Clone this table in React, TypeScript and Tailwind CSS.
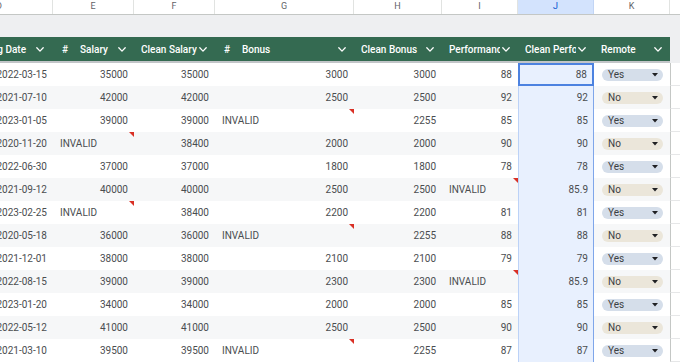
import React from "react";

type Row = { d: string; e: string; f: string; g: string; h: string; i: string; j: string; k: "Yes" | "No" };

const rows: Row[] = [
  { d: "2022-03-15", e: "35000", f: "35000", g: "3000", h: "3000", i: "88", j: "88", k: "Yes" },
  { d: "2021-07-10", e: "42000", f: "42000", g: "2500", h: "2500", i: "92", j: "92", k: "No" },
  { d: "2023-01-05", e: "39000", f: "39000", g: "INVALID", h: "2255", i: "85", j: "85", k: "Yes" },
  { d: "2020-11-20", e: "INVALID", f: "38400", g: "2000", h: "2000", i: "90", j: "90", k: "No" },
  { d: "2022-06-30", e: "37000", f: "37000", g: "1800", h: "1800", i: "78", j: "78", k: "Yes" },
  { d: "2021-09-12", e: "40000", f: "40000", g: "2500", h: "2500", i: "INVALID", j: "85.9", k: "No" },
  { d: "2023-02-25", e: "INVALID", f: "38400", g: "2200", h: "2200", i: "81", j: "81", k: "Yes" },
  { d: "2020-05-18", e: "36000", f: "36000", g: "INVALID", h: "2255", i: "88", j: "88", k: "No" },
  { d: "2021-12-01", e: "38000", f: "38000", g: "2100", h: "2100", i: "79", j: "79", k: "Yes" },
  { d: "2022-08-15", e: "39000", f: "39000", g: "2300", h: "2300", i: "INVALID", j: "85.9", k: "No" },
  { d: "2023-01-20", e: "34000", f: "34000", g: "2000", h: "2000", i: "85", j: "85", k: "Yes" },
  { d: "2022-05-12", e: "41000", f: "41000", g: "2500", h: "2500", i: "90", j: "90", k: "No" },
  { d: "2021-03-10", e: "39500", f: "39500", g: "INVALID", h: "2255", i: "87", j: "87", k: "Yes" },
];

const Chevron = () => (
  <svg width="8" height="5" viewBox="0 0 8 5" className="shrink-0">
    <path d="M0.8 0.8 L4 4.1 L7.2 0.8" fill="none" stroke="white" strokeWidth="1.3" strokeLinecap="round" strokeLinejoin="round" />
  </svg>
);

const Flag = () => (
  <span className="absolute right-0 top-0 w-0 h-0 border-t-[5px] border-l-[5px] border-t-[#d93025] border-l-transparent" />
);

function ValueCell({ v, w }: { v: string; w: string }) {
  const invalid = v === "INVALID";
  return (
    <div className={`${w} shrink-0 relative flex items-center ${invalid ? "justify-start pl-[7px]" : "justify-end pr-[6px]"}`}>
      <span className="whitespace-nowrap">{v}</span>
      {invalid && <Flag />}
    </div>
  );
}

function Chip({ v }: { v: "Yes" | "No" }) {
  return (
    <div
      className={`w-[61px] h-[12px] rounded-full flex items-center justify-between pl-[6px] pr-[5px] ${
        v === "Yes" ? "bg-[#d5deea]" : "bg-[#ebe6da]"
      }`}
    >
      <span className="leading-none text-[#3c4043]">{v}</span>
      <svg width="6" height="4" viewBox="0 0 6 4">
        <path d="M0 0 L6 0 L3 3.6 Z" fill="#202124" />
      </svg>
    </div>
  );
}

function HeaderCell({ w, label, hash }: { w: string; label: string; hash?: boolean }) {
  return (
    <div className={`${w} shrink-0 flex items-center ${hash ? "pl-[9px]" : "pl-[7px]"} pr-[8px] bg-[#346a51] border-b-2 border-[#c2c5c8]`}>
      {hash && <span className="w-[18px] shrink-0">#</span>}
      <span className="flex-1 min-w-0 overflow-hidden whitespace-nowrap">{label}</span>
      <span className="ml-[2px] flex items-center">
        <Chevron />
      </span>
    </div>
  );
}

const letters: { l: string; w: string; sel?: boolean }[] = [
  { l: "E", w: "w-[81px]" },
  { l: "F", w: "w-[81px]" },
  { l: "G", w: "w-[139px]" },
  { l: "H", w: "w-[88px]" },
  { l: "I", w: "w-[76px]" },
  { l: "J", w: "w-[76px]", sel: true },
  { l: "K", w: "w-[76px]" },
];

export default function App() {
  return (
    <div className="w-[680px] h-[362px] overflow-hidden bg-white flex flex-col font-['Roboto','Liberation_Sans',sans-serif]">
      {/* column letters */}
      <div className="h-[15px] shrink-0 flex border-b border-[#c4c7c5] text-[9px] text-[#5f6368]">
        <div className="w-[53px] shrink-0 border-r border-[#e1e3e1] overflow-hidden flex items-center">
          <span className="-ml-[4px]">D</span>
        </div>
        {letters.map((c) => (
          <div
            key={c.l}
            className={`${c.w} shrink-0 flex items-center justify-center border-r ${
              c.sel ? "bg-[#d3e3fd] text-[#0b57d0] border-[#c2d5f5]" : "border-[#e1e3e1]"
            }`}
          >
            {c.l}
          </div>
        ))}
        <div className="flex-1" />
      </div>

      {/* gray band */}
      <div className="h-[22px] shrink-0 bg-[#eeeff1]" />

      {/* table header */}
      <div className="h-[26px] shrink-0 flex text-[10px] font-medium text-white">
        <div className="w-[53px] shrink-0 overflow-hidden flex items-center justify-end pr-[9px] bg-[#346a51] border-b-2 border-[#c2c5c8]">
          <span className="whitespace-nowrap">Hiring Date</span>
          <span className="ml-[10px] flex items-center">
            <Chevron />
          </span>
        </div>
        <HeaderCell w="w-[81px]" label="Salary" hash />
        <HeaderCell w="w-[81px]" label="Clean Salary" />
        <HeaderCell w="w-[139px]" label="Bonus" hash />
        <HeaderCell w="w-[88px]" label="Clean Bonus" />
        <HeaderCell w="w-[76px]" label="Performance" />
        <HeaderCell w="w-[76px]" label="Clean Performance" />
        <HeaderCell w="w-[76px]" label="Remote" />
        <div className="flex-1 bg-[#eeeff1]" />
      </div>

      {/* data rows */}
      <div className="flex flex-col text-[10px] text-[#4a4d50]">
        {rows.map((r, idx) => {
          const bg = idx % 2 === 1 ? "bg-[#f6f7f8]" : "bg-white";
          return (
            <div key={idx} className="h-[23px] shrink-0 flex">
              <div className={`flex ${bg}`}>
                <div className="w-[53px] shrink-0 overflow-hidden flex items-center justify-end pr-[6px]">
                  <span className="whitespace-nowrap">{r.d}</span>
                </div>
                <ValueCell v={r.e} w="w-[81px]" />
                <ValueCell v={r.f} w="w-[81px]" />
                <ValueCell v={r.g} w="w-[139px]" />
                <ValueCell v={r.h} w="w-[88px]" />
                <ValueCell v={r.i} w="w-[76px]" />
                <div
                  className={`w-[76px] shrink-0 flex items-center justify-end bg-[#e8f0fe] ${
                    idx === 0
                      ? "border-2 border-[#4c82e0] pr-[5px]"
                      : "border-l border-r border-l-[#bcd2f7] border-r-[#7fa6ea] pr-[5px]"
                  }`}
                >
                  <span>{r.j}</span>
                </div>
                <div className="w-[76px] shrink-0 flex items-center pl-[8px]">
                  <Chip v={r.k} />
                </div>
              </div>
              <div className="flex-1 bg-white border-l border-b border-l-[#c4c7c5] border-b-[#e6e7e8]" />
            </div>
          );
        })}
      </div>
    </div>
  );
}
